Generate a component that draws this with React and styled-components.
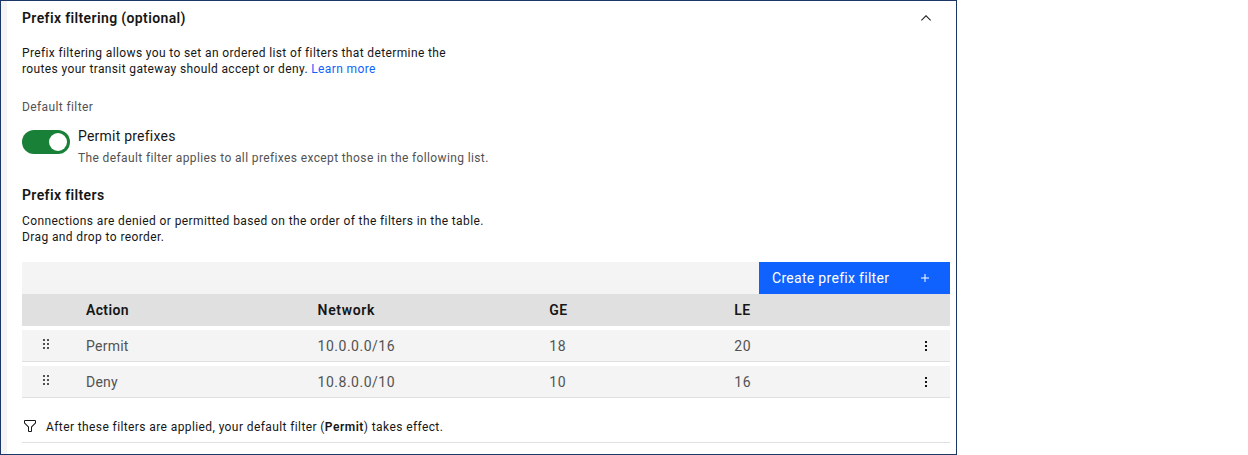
import React from "react";
import styled, { createGlobalStyle } from "styled-components";

const GlobalStyle = createGlobalStyle`
  *, *::before, *::after { box-sizing: border-box; }
  body { margin: 0; background: #fff; }
  h2, h3, p { margin: 0; }
  button { border: 0; padding: 0; background: none; font: inherit; letter-spacing: inherit; color: inherit; }
`;

const Frame = styled.section`
  width: 957px;
  height: 455px;
  border: 1px solid #1c3766;
  background: #fff;
  display: flex;
  color: #161616;
  font-family: Roboto, "Liberation Sans", sans-serif;
  font-size: 14px;
  line-height: 18px;
  letter-spacing: 0.3px;
`;
const Gutter = styled.div`
  flex: 0 0 6px;
  background: #f4f4f4;
`;
const Content = styled.div`
  flex: 1;
  display: flex;
  flex-direction: column;
  padding: 8px 6px 0 15px;
`;
const Header = styled.header`
  display: flex;
  justify-content: space-between;
`;
const Heading = styled.h2`
  font-size: 14px;
  font-weight: 600;
  line-height: 18px;
  letter-spacing: 0.37px;
`;
const CollapseButton = styled.button`
  width: 16px;
  height: 16px;
  margin: 1px 16px 0 0;
`;
const Icon = styled.svg`
  display: block;
  width: 16px;
  height: 16px;
  fill: currentColor;
`;
const Copy = styled.p`
  font-size: 12px;
  line-height: 16px;
  letter-spacing: ${(p) => p.$spacing ?? 0.39}px;
  margin-top: ${(p) => p.$top}px;
  color: ${(p) => (p.$muted ? "#525252" : "inherit")};
`;
const Link = styled.a`
  color: #0f62fe;
  text-decoration: none;
`;
const ToggleRow = styled.div`
  display: flex;
  gap: 8px;
  margin: 12px 0 20px;
`;
const Toggle = styled.button`
  display: flex;
  justify-content: flex-end;
  width: 48px;
  height: 24px;
  margin-top: 3px;
  padding: 3px;
  border-radius: 12px;
  background: #198038;
`;
const Knob = styled.span`
  width: 18px;
  height: 18px;
  border-radius: 50%;
  background: #fff;
`;
const ToggleLabel = styled.div`
  letter-spacing: 0.22px;
`;
const Toolbar = styled.div`
  display: flex;
  justify-content: flex-end;
  height: 32px;
  margin-top: 17px;
  background: #f4f4f4;
`;
const CreateButton = styled.button`
  display: flex;
  align-items: center;
  justify-content: space-between;
  width: 191px;
  padding: 0 17px 0 13px;
  background: #0f62fe;
  color: #fff;
`;
const Row = styled.div`
  display: grid;
  grid-template-columns: 64px 231.6px 231.7px 185px 1fr 32px;
  align-items: center;
  height: 32px;
`;
const HeadRow = styled(Row)`
  background: #e0e0e0;
  font-weight: 600;
`;
const Cell = styled.span`
  letter-spacing: ${(p) => p.$spacing}px;
`;
const BodyRow = styled(Row)`
  margin-top: 4px;
  border-bottom: 1px solid #e0e0e0;
  background: #f4f4f4;
  color: #525252;

  ${Cell} {
    padding-top: 1px;
  }
`;
const DragHandle = styled.div`
  align-self: start;
  padding: 6px 0 0 16px;
`;
const MenuButton = styled.button`
  align-self: start;
  width: 16px;
  margin-top: 8px;
  color: #161616;
`;
const Note = styled.footer`
  display: flex;
  gap: 8px;
  height: 45px;
  padding-top: 20px;
  border-bottom: 1px solid #e0e0e0;
`;
const Strong = styled.strong`
  font-weight: 600;
  letter-spacing: 0.5px;
`;

const ChevronUp = () => (
  <Icon viewBox="0 0 32 32">
    <path d="M16 10 26 20 24.6 21.4 16 12.8 7.4 21.4 6 20z" />
  </Icon>
);
const Plus = () => (
  <Icon viewBox="0 0 32 32">
    <path d="M17 15V8h-2v7H8v2h7v7h2v-7h7v-2z" />
  </Icon>
);
const Filter = () => (
  <Icon viewBox="0 0 32 32">
    <path d="M18,28H14a2,2,0,0,1-2-2V18.41L4.59,11A2,2,0,0,1,4,9.59V6A2,2,0,0,1,6,4H26a2,2,0,0,1,2,2V9.59A2,2,0,0,1,27.41,11L20,18.41V26A2,2,0,0,1,18,28ZM6,6V9.59l8,8V26h4V17.59l8-8V6Z" />
  </Icon>
);
const Draggable = () => (
  <Icon viewBox="0 0 16 16">
    <path d="M5 3h2v2H5zM9 3h2v2H9zM5 7h2v2H5zM9 7h2v2H9zM5 11h2v2H5zM9 11h2v2H9z" />
  </Icon>
);
const Overflow = () => (
  <Icon viewBox="0 0 16 16">
    <path d="M7 3h2v2H7zM7 7h2v2H7zM7 11h2v2H7z" />
  </Icon>
);

const filters = [
  { action: "Permit", network: "10.0.0.0/16", ge: 18, le: 20 },
  { action: "Deny", network: "10.8.0.0/10", ge: 10, le: 16 },
];

export default function App() {
  return (
    <>
      <GlobalStyle />
      <Frame>
        <Gutter />
        <Content>
          <Header>
            <Heading>Prefix filtering (optional)</Heading>
            <CollapseButton aria-label="Collapse">
              <ChevronUp />
            </CollapseButton>
          </Header>
          <Copy $top={18} $spacing={0.37}>
            Prefix filtering allows you to set an ordered list of filters that determine the
            <br />
            routes your transit gateway should accept or deny. <Link>Learn more</Link>
          </Copy>
          <Copy $top={22} $muted>
            Default filter
          </Copy>
          <ToggleRow>
            <Toggle role="switch" aria-checked="true" aria-label="Default filter">
              <Knob />
            </Toggle>
            <div>
              <ToggleLabel>Permit prefixes</ToggleLabel>
              <Copy $top={5} $spacing={0.375} $muted>
                The default filter applies to all prefixes except those in the following list.
              </Copy>
            </div>
          </ToggleRow>
          <Heading as="h3">Prefix filters</Heading>
          <Copy $top={9}>
            Connections are denied or permitted based on the order of the filters in the table.
            <br />
            Drag and drop to reorder.
          </Copy>
          <Toolbar>
            <CreateButton>
              Create prefix filter
              <Plus />
            </CreateButton>
          </Toolbar>
          <HeadRow>
            <span />
            <Cell $spacing={0.35}>Action</Cell>
            <Cell $spacing={0.65}>Network</Cell>
            <Cell $spacing={0.5}>GE</Cell>
            <Cell $spacing={0.3}>LE</Cell>
          </HeadRow>
          {filters.map((f) => (
            <BodyRow key={f.action}>
              <DragHandle>
                <Draggable />
              </DragHandle>
              <Cell $spacing={0.25}>{f.action}</Cell>
              <Cell $spacing={0.5}>{f.network}</Cell>
              <Cell $spacing={0.7}>{f.ge}</Cell>
              <Cell $spacing={0.7}>{f.le}</Cell>
              <MenuButton aria-label="Row actions">
                <Overflow />
              </MenuButton>
            </BodyRow>
          ))}
          <Note>
            <Filter />
            <Copy $top={1} $spacing={0.4}>
              After these filters are applied, your default filter (<Strong>Permit</Strong>) takes effect.
            </Copy>
          </Note>
        </Content>
      </Frame>
    </>
  );
}
